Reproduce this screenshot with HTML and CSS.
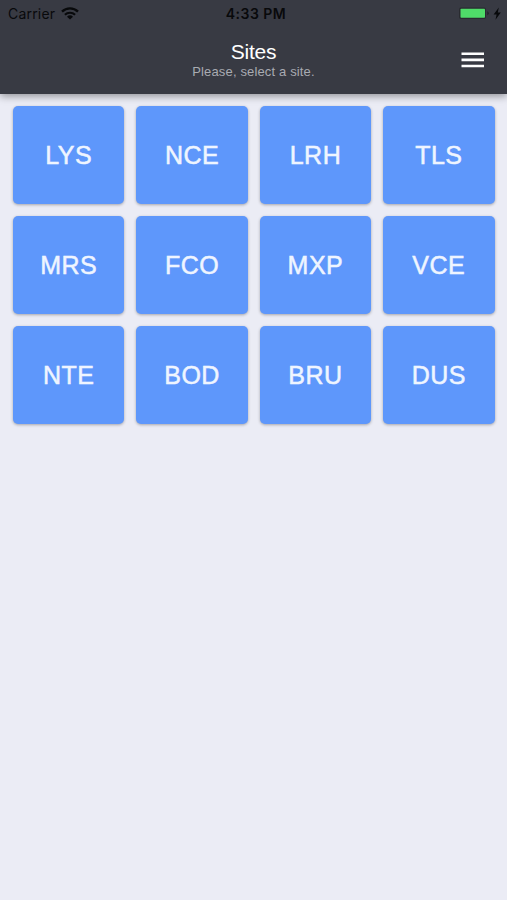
FILE: index.html
```html
<!DOCTYPE html>
<html lang="en">
<head>
  <meta charset="UTF-8" />
  <meta name="viewport" content="width=device-width, initial-scale=1.0"/>
  <title>Sites</title>
  <link rel="stylesheet" href="styles.css">
</head>
<body>
  <header class="header">
    <div class="status-bar">
      <div class="status-left">
        <span class="carrier">Carrier</span>
        <svg class="wifi" width="18" height="13" viewBox="0 0 18 13">
          <path d="M1 4.6a11.5 11.5 0 0 1 16 0" fill="none" stroke="#08090b" stroke-width="2.4"/>
          <path d="M3.9 7.8a7.3 7.3 0 0 1 10.2 0" fill="none" stroke="#08090b" stroke-width="2.1"/>
          <path d="M9 12.6L6 9.7a4.3 4.3 0 0 1 6 0z" fill="#08090b"/>
        </svg>
      </div>
      <span class="time">4:33 PM</span>
      <div class="status-right">
        <svg width="44" height="14" viewBox="0 0 44 14">
          <rect x="1" y="0.4" width="27" height="11.6" rx="2" fill="#292b30"/>
          <rect x="2.5" y="1.8" width="24.5" height="8.9" rx="0.8" fill="#4fdc69"/>
          <path d="M29.3 4.2v4q1.4-.5 1.4-2t-1.4-2z" fill="#202226"/>
          <path d="M40.8 0.6L35.6 7.4h3l-1.1 5.4L42.8 5.4h-3z" fill="#08090b"/>
        </svg>
      </div>
    </div>

    <div class="toolbar">
      <div class="titles">
        <h1>Sites</h1>
        <p>Please, select a site.</p>
      </div>
      <button class="menu" aria-label="Menu">
        <svg width="23" height="16" viewBox="0 0 23 16">
          <path d="M0.5 1.8h22.5M0.5 7.9h22.5M0.5 14h22.5" stroke="#fff" stroke-width="2.6"/>
        </svg>
      </button>
    </div>
  </header>

  <main class="sites">
    <button class="site">LYS</button>
    <button class="site">NCE</button>
    <button class="site">LRH</button>
    <button class="site">TLS</button>
    <button class="site">MRS</button>
    <button class="site">FCO</button>
    <button class="site">MXP</button>
    <button class="site">VCE</button>
    <button class="site">NTE</button>
    <button class="site">BOD</button>
    <button class="site">BRU</button>
    <button class="site">DUS</button>
  </main>
</body>
</html>
```
FILE: styles.css
```css
* {
  box-sizing: border-box;
}

body {
  margin: 0;
  min-height: 100vh;
  background-color: #ebecf5;
  font-family: "Liberation Sans", Arial, sans-serif;
}

.header {
  height: 94px;
  background-color: #383a43;
  box-shadow: 0 2px 8px rgba(0, 0, 0, 0.4);
}

.status-bar {
  display: grid;
  grid-template-columns: 1fr auto 1fr;
  align-items: center;
  height: 27px;
  padding: 0 5px 0 8px;
  font-family: Inter, sans-serif;
  color: #08090b;
}

.status-left {
  display: flex;
  align-items: center;
  gap: 6px;
}

.carrier {
  font-size: 14px;
  letter-spacing: 0.2px;
}

.time {
  padding-left: 2px;
  font-size: 14px;
  font-weight: 600;
  letter-spacing: 0.5px;
}

.status-right {
  display: flex;
  justify-content: flex-end;
}

.toolbar {
  display: grid;
  grid-template-columns: 1fr auto 1fr;
  align-items: center;
  height: 65px;
  padding: 0 23px;
}

.titles {
  grid-column: 2;
  padding-top: 1px;
  text-align: center;
}

h1 {
  margin: 0;
  font-size: 21px;
  font-weight: normal;
  line-height: 24px;
  letter-spacing: -0.2px;
  color: #fff;
}

p {
  margin: 0;
  font-size: 13px;
  line-height: 16px;
  letter-spacing: 0.15px;
  color: #a9abb2;
}

.menu {
  display: flex;
  justify-self: end;
  padding: 0;
  border: none;
  background: none;
}

.sites {
  display: grid;
  grid-template-columns: repeat(4, 1fr);
  grid-auto-rows: 97.6px;
  gap: 12.4px 12px;
  padding: 12px 12.5px 12px 13px;
}

.site {
  padding: 2px 0 0;
  border: none;
  border-radius: 5px;
  background-color: #5e97fb;
  box-shadow: 0 1px 3px rgba(0, 0, 0, 0.3);
  font-family: inherit;
  font-size: 25px;
  letter-spacing: 0.5px;
  color: #eff5ff;
  -webkit-text-stroke: 0.5px #eff5ff;
}
```
